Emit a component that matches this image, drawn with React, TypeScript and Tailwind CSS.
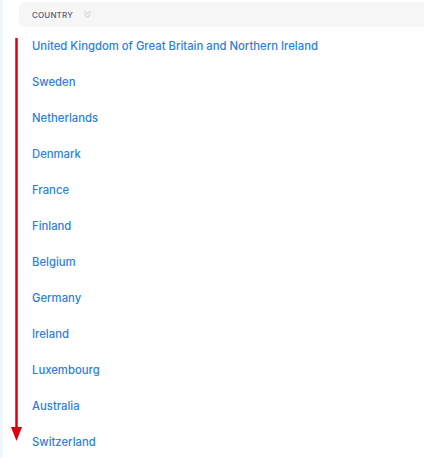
const countries = [
  'United Kingdom of Great Britain and Northern Ireland',
  'Sweden',
  'Netherlands',
  'Denmark',
  'France',
  'Finland',
  'Belgium',
  'Germany',
  'Ireland',
  'Luxembourg',
  'Australia',
  'Switzerland',
]

export default function App() {
  return (
    <div className="relative flex h-[458px] w-[424px] overflow-hidden bg-white font-['Inter',sans-serif]">
      <div className="w-[3px] shrink-0 bg-[#f2f7fd]" />
      <div className="flex-1 pl-[16px]">
        <div className="mt-[2px] flex h-[25px] items-center gap-[9px] rounded-l-md bg-[#f6f6f6] px-[13px]">
          <span className="text-[8px] font-medium uppercase tracking-[0.02em] text-[#545a82]">Country</span>
          <svg viewBox="0 0 24 24" className="h-[11px] w-[11px] text-[#b4b8c2]" fill="none" stroke="currentColor" strokeWidth="1.8" strokeLinecap="round" strokeLinejoin="round" aria-hidden="true">
            <path d="m6 5 6 6 6-6" />
            <path d="m6 12 6 6 6-6" />
          </svg>
        </div>
        <ul className="pt-[1px]">
          {countries.map((c) => (
            <li key={c} className="flex h-[36px] items-center pl-[13px]">
              <a href="#" className="text-[11.3px] font-medium text-[#2f7fd7]">
                {c}
              </a>
            </li>
          ))}
        </ul>
      </div>

      {/* red scroll arrow overlay */}
      <svg className="absolute left-[10px] top-[38px] h-[404px] w-[13px]" viewBox="0 0 13 404" aria-hidden="true">
        <line x1="6.5" y1="0" x2="6.5" y2="392" stroke="#d9000f" strokeWidth="2.5" />
        <path d="M1 389 L12 389 L6.5 403 Z" fill="#d9000f" />
      </svg>
    </div>
  )
}
